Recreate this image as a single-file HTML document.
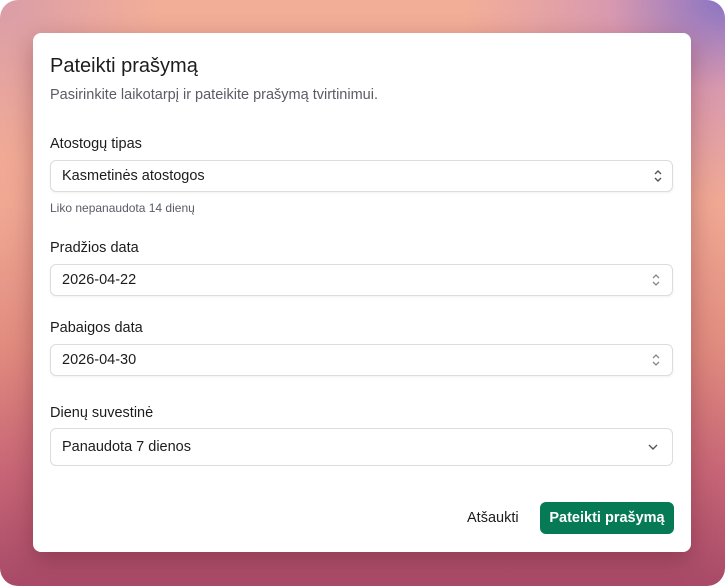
<!DOCTYPE html>
<html><head><meta charset="utf-8"><style>
*{box-sizing:border-box;margin:0;padding:0}
body{width:725px;height:586px;background:#fff;font-family:"Liberation Sans",sans-serif;overflow:hidden}
.bg{position:absolute;left:0;top:0;width:725px;height:586px;border-radius:18px;overflow:hidden;
background:radial-gradient(ellipse 260px 200px at 725px 0,#8a74c4 0%,rgba(200,140,190,.6) 45%,rgba(240,170,160,0) 100%),
radial-gradient(ellipse 160px 160px at 0 0,rgba(215,155,170,.9) 0%,rgba(240,170,160,0) 100%),
linear-gradient(180deg,#f3ae98 0%,#f0a893 35%,#e08a7e 60%,#c86676 80%,#a84a68 100%);}
.card{position:absolute;left:33px;top:33px;width:658px;height:519px;background:#fff;border-radius:8px;box-shadow:0 8px 24px rgba(80,20,40,.35)}
.a{position:absolute;white-space:nowrap;color:#1c1c1f}
.in{position:absolute;left:17px;width:623px;border:1px solid #dcdce0;border-radius:6px;box-shadow:0 1px 2px rgba(0,0,0,.06)}
.in span{position:absolute;left:11px;font-size:14.5px;color:#1c1c1f}
svg{position:absolute}
</style></head><body>
<div class="bg"></div>
<div class="card">
<div class="a" style="left:17px;top:22px;font-size:20px">Pateikti prašymą</div>
<div class="a" style="left:17px;top:54px;font-size:14.5px;color:#5b5b66">Pasirinkite laikotarpį ir pateikite prašymą tvirtinimui.</div>
<div class="a" style="left:17px;top:103px;font-size:14.5px">Atostogų tipas</div>
<div class="in" style="top:127px;height:32px"><span style="top:7px">Kasmetinės atostogos</span>
<svg style="left:601px;top:8px" width="12" height="14" viewBox="0 0 12 14"><path d="M3 5l3-3 3 3M3 9l3 3 3-3" fill="none" stroke="#555" stroke-width="1.4"/></svg></div>
<div class="a" style="left:17px;top:168px;font-size:12px;color:#5b5b66">Liko nepanaudota 14 dienų</div>
<div class="a" style="left:17px;top:207px;font-size:14.5px">Pradžios data</div>
<div class="in" style="top:231px;height:32px"><span style="top:7px">2026-04-22</span>
<svg style="left:599px;top:8px" width="12" height="14" viewBox="0 0 12 14"><path d="M3 5l3-3 3 3M3 9l3 3 3-3" fill="none" stroke="#888" stroke-width="1.3"/></svg></div>
<div class="a" style="left:17px;top:287px;font-size:14.5px">Pabaigos data</div>
<div class="in" style="top:311px;height:32px"><span style="top:7px">2026-04-30</span>
<svg style="left:599px;top:8px" width="12" height="14" viewBox="0 0 12 14"><path d="M3 5l3-3 3 3M3 9l3 3 3-3" fill="none" stroke="#888" stroke-width="1.3"/></svg></div>
<div class="a" style="left:17px;top:372px;font-size:14.5px">Dienų suvestinė</div>
<div class="in" style="top:395px;height:38px;box-shadow:none"><span style="top:10px">Panaudota 7 dienos</span>
<svg style="left:596px;top:13px" width="12" height="10" viewBox="0 0 12 10"><path d="M2 3l4 4 4-4" fill="none" stroke="#555" stroke-width="1.4"/></svg></div>
<div class="a" style="left:434px;top:477px;font-size:14.5px">Atšaukti</div>
<div style="position:absolute;left:507px;top:469px;width:134px;height:32px;background:#067a55;border-radius:6px;color:#fff;font-size:14.5px;font-weight:bold;text-align:center;line-height:32px">Pateikti prašymą</div>
</div>
</body></html>
